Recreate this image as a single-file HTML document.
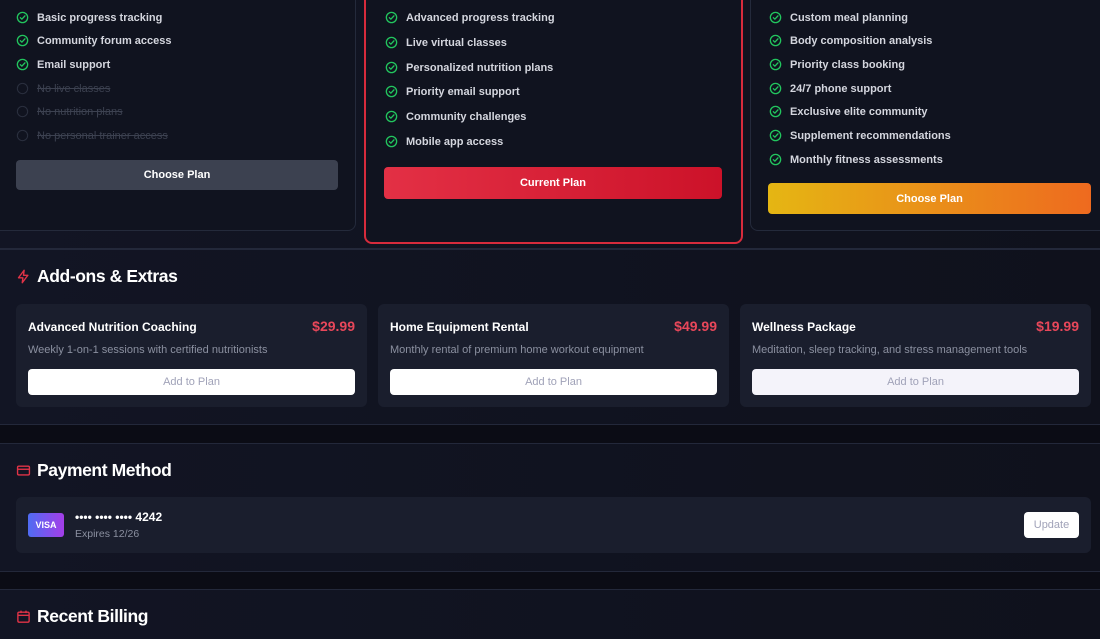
<!DOCTYPE html>
<html><head><meta charset="utf-8"><style>
*{margin:0;padding:0;box-sizing:border-box}
html{width:1100px;height:639px;overflow:hidden}
body{width:1100px;height:639px;overflow:hidden;background:#0b0c15;font-family:"Liberation Sans",sans-serif;position:relative;color:#fff}
.abs{position:absolute}
.sec{position:absolute;left:-10px;width:1120px;background:linear-gradient(90deg,#121524,#0f111c);border:1px solid #23283a;border-radius:10px}
.card{position:absolute;background:#10131f;border:1px solid #242a3b;border-radius:8px}
.f{position:absolute;font-size:11px;color:#d4d6de;display:flex;align-items:center;gap:8px;font-weight:bold;white-space:nowrap}
.f svg{width:13px;height:13px}
.off{color:#3c4150;text-decoration:line-through;font-weight:normal}
.btn{position:absolute;border-radius:4px;font-size:11px;font-weight:bold;display:flex;align-items:center;justify-content:center;color:#fff}
.h{position:absolute;font-size:17.5px;font-weight:bold;letter-spacing:-.4px;display:flex;align-items:center;gap:6px}
.ad{position:absolute;top:304px;width:351px;height:103px;background:#1a1e2d;border-radius:6px}
.ad .t{position:absolute;left:12px;top:16px;font-size:12px;font-weight:bold}
.ad .p{position:absolute;right:12px;top:14px;font-size:14px;font-weight:bold;color:#e8475a}
.ad .d{position:absolute;left:12px;top:40px;font-size:11px;color:#8b90a0}
.ad .b{position:absolute;left:12px;right:12px;top:65px;height:26px;background:#fff;border-radius:4px;color:#a0a2b8;font-size:11px;display:flex;align-items:center;justify-content:center}
</style></head><body>
<svg width="0" height="0" style="position:absolute"><defs>
<symbol id="ck" viewBox="0 0 24 24"><circle cx="12" cy="12" r="9.5" fill="none" stroke="#22c55e" stroke-width="2.4"/><path d="M8 12.3l2.8 2.8L16.5 9" fill="none" stroke="#22c55e" stroke-width="2.4" stroke-linecap="round" stroke-linejoin="round"/></symbol>
<symbol id="oc" viewBox="0 0 24 24"><circle cx="12" cy="12" r="9.5" fill="none" stroke="#2a2f3e" stroke-width="2"/></symbol>
</defs></svg>

<div class="sec" style="top:-20px;height:269px"></div>
<div class="card" style="left:-10px;top:-10px;width:366px;height:241px"></div>
<div class="card" style="left:364px;top:-10px;width:379px;height:254px;border:2px solid #d72b3c"></div>
<div class="card" style="left:750px;top:-10px;width:370px;height:241px"></div>

<div class="f" style="left:16px;top:11px"><svg><use href="#ck"/></svg>Basic progress tracking</div>
<div class="f" style="left:16px;top:34px"><svg><use href="#ck"/></svg>Community forum access</div>
<div class="f" style="left:16px;top:58px"><svg><use href="#ck"/></svg>Email support</div>
<div class="f off" style="left:16px;top:82px"><svg><use href="#oc"/></svg>No live classes</div>
<div class="f off" style="left:16px;top:105px"><svg><use href="#oc"/></svg>No nutrition plans</div>
<div class="f off" style="left:16px;top:129px"><svg><use href="#oc"/></svg>No personal trainer access</div>
<div class="btn" style="left:16px;top:160px;width:322px;height:30px;background:#3c4150">Choose Plan</div>

<div class="f" style="left:385px;top:11px"><svg><use href="#ck"/></svg>Advanced progress tracking</div>
<div class="f" style="left:385px;top:36px"><svg><use href="#ck"/></svg>Live virtual classes</div>
<div class="f" style="left:385px;top:61px"><svg><use href="#ck"/></svg>Personalized nutrition plans</div>
<div class="f" style="left:385px;top:85px"><svg><use href="#ck"/></svg>Priority email support</div>
<div class="f" style="left:385px;top:110px"><svg><use href="#ck"/></svg>Community challenges</div>
<div class="f" style="left:385px;top:135px"><svg><use href="#ck"/></svg>Mobile app access</div>
<div class="btn" style="left:384px;top:167px;width:338px;height:32px;background:linear-gradient(90deg,#e33045,#cc1229)">Current Plan</div>

<div class="f" style="left:769px;top:11px"><svg><use href="#ck"/></svg>Custom meal planning</div>
<div class="f" style="left:769px;top:34px"><svg><use href="#ck"/></svg>Body composition analysis</div>
<div class="f" style="left:769px;top:58px"><svg><use href="#ck"/></svg>Priority class booking</div>
<div class="f" style="left:769px;top:82px"><svg><use href="#ck"/></svg>24/7 phone support</div>
<div class="f" style="left:769px;top:105px"><svg><use href="#ck"/></svg>Exclusive elite community</div>
<div class="f" style="left:769px;top:129px"><svg><use href="#ck"/></svg>Supplement recommendations</div>
<div class="f" style="left:769px;top:153px"><svg><use href="#ck"/></svg>Monthly fitness assessments</div>
<div class="btn" style="left:768px;top:183px;width:323px;height:31px;background:linear-gradient(90deg,#e5b613,#ee6a1f)">Choose Plan</div>

<div class="sec" style="top:249px;height:176px"></div>
<div class="h" style="left:16px;top:266px"><svg width="15" height="15" viewBox="0 0 24 24"><path d="M13 2L4 14h7l-1 8 9-12h-7l1-8z" fill="none" stroke="#e03347" stroke-width="2.2" stroke-linejoin="round"/></svg>Add-ons &amp; Extras</div>
<div class="ad" style="left:16px"><div class="t">Advanced Nutrition Coaching</div><div class="p">$29.99</div><div class="d">Weekly 1-on-1 sessions with certified nutritionists</div><div class="b">Add to Plan</div></div>
<div class="ad" style="left:378px"><div class="t">Home Equipment Rental</div><div class="p">$49.99</div><div class="d">Monthly rental of premium home workout equipment</div><div class="b">Add to Plan</div></div>
<div class="ad" style="left:740px"><div class="t">Wellness Package</div><div class="p">$19.99</div><div class="d">Meditation, sleep tracking, and stress management tools</div><div class="b" style="background:#f4f3fa">Add to Plan</div></div>

<div class="sec" style="top:443px;height:129px"></div>
<div class="h" style="left:16px;top:460px"><svg width="15" height="15" viewBox="0 0 24 24"><rect x="2.5" y="5" width="19" height="14" rx="2" fill="none" stroke="#e03347" stroke-width="2.2"/><path d="M2.5 10h19" stroke="#e03347" stroke-width="2.2"/></svg>Payment Method</div>
<div class="abs" style="left:16px;top:497px;width:1075px;height:56px;background:#1a1e2d;border-radius:6px"></div>
<div class="abs" style="left:28px;top:513px;width:36px;height:24px;border-radius:3px;background:linear-gradient(90deg,#4f6cf2,#a43ee8);font-size:9px;font-weight:bold;display:flex;align-items:center;justify-content:center">VISA</div>
<div class="abs" style="left:75px;top:510px;font-size:12px;font-weight:bold">•••• •••• •••• 4242</div>
<div class="abs" style="left:75px;top:528px;font-size:10.5px;color:#8b90a0">Expires 12/26</div>
<div class="abs" style="left:1024px;top:512px;width:55px;height:26px;background:#fff;border-radius:4px;color:#a0a2b8;font-size:11px;display:flex;align-items:center;justify-content:center">Update</div>

<div class="sec" style="top:589px;height:60px"></div>
<div class="h" style="left:16px;top:606px"><svg width="15" height="15" viewBox="0 0 24 24"><rect x="3" y="5" width="18" height="16" rx="2" fill="none" stroke="#e03347" stroke-width="2.2"/><path d="M3 10h18M8 2.5v4M16 2.5v4" stroke="#e03347" stroke-width="2.2"/></svg>Recent Billing</div>
</body></html>
